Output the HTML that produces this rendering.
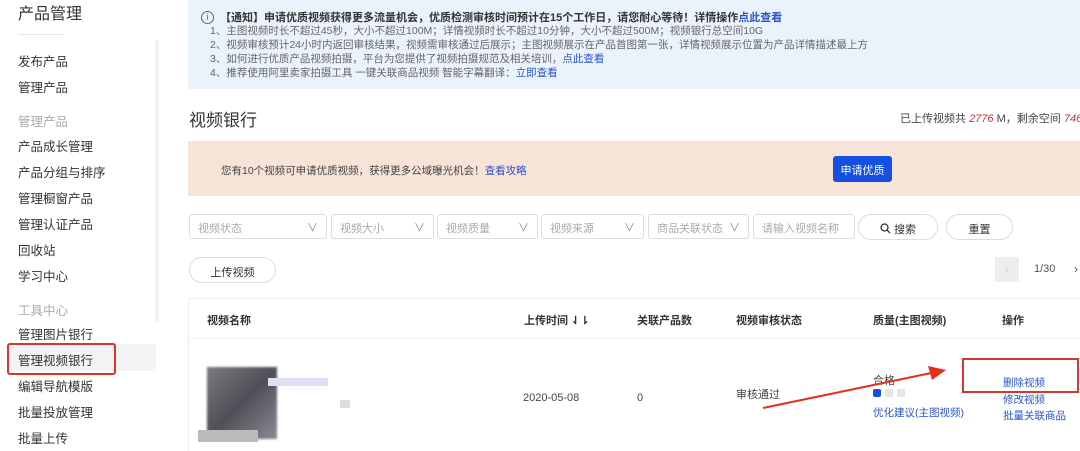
<!DOCTYPE html>
<html><head><meta charset="utf-8"><style>
*{margin:0;padding:0;box-sizing:border-box}
body{width:1080px;height:451px;overflow:hidden;background:#fff;position:relative;font-family:"Liberation Sans","Noto Sans CJK SC",sans-serif;color:#333;font-size:12px}
.a{position:absolute;white-space:nowrap}
.s{left:18px;font-size:12.5px;color:#333}
.g{color:#aaa}
.sel{border:1px solid #ddd;height:25px;top:214px;border-radius:3px;color:#aaa;font-size:11px;padding:5px 0 0 8px}
.sel i{position:absolute;right:8px;top:4px;font-style:normal;color:#888}
.btn{border:1px solid #ddd;border-radius:13px;height:26px;text-align:center;font-size:11px;padding-top:6px;color:#333}
.th{top:312px;font-size:11px;font-weight:bold;color:#333}
.blue{color:#2a55c8}
</style></head><body>
<div class="a" style="left:18px;top:0px;font-size:16px;color:#333">产品管理</div>
<div class="a" style="left:18px;top:34px;width:46px;height:1px;background:#e6e6e6"></div>
<div class="a" style="left:155px;top:40px;width:4px;height:282px;background:#f2f2f2"></div>
<div class="a s" style="top:51px">发布产品</div>
<div class="a s" style="top:77px">管理产品</div>
<div class="a s g" style="top:111px">管理产品</div>
<div class="a s" style="top:136px">产品成长管理</div>
<div class="a s" style="top:162px">产品分组与排序</div>
<div class="a s" style="top:188px">管理橱窗产品</div>
<div class="a s" style="top:214px">管理认证产品</div>
<div class="a s" style="top:240px">回收站</div>
<div class="a s" style="top:266px">学习中心</div>
<div class="a s g" style="top:300px">工具中心</div>
<div class="a s" style="top:324px">管理图片银行</div>
<div class="a" style="left:8px;top:344px;width:148px;height:27px;background:#f3f3f5"></div>
<div class="a" style="left:7px;top:343px;width:109px;height:32px;border:2px solid #d9352c;border-radius:3px"></div>
<div class="a s" style="top:350px">管理视频银行</div>
<div class="a s" style="top:376px">编辑导航模版</div>
<div class="a s" style="top:402px">批量投放管理</div>
<div class="a s" style="top:428px">批量上传</div>
<div class="a" style="left:188px;top:0;width:892px;height:89px;background:#eaf2fb"></div>
<div class="a" style="left:201px;top:11px;width:13px;height:13px;border:1px solid #666;border-radius:50%;font-size:9px;text-align:center;line-height:11px;color:#666">i</div>
<div class="a" style="left:220px;top:9px;font-size:11px;font-weight:bold;color:#333">【通知】申请优质视频获得更多流量机会，优质检测审核时间预计在15个工作日，请您耐心等待！详情操作<span class="blue">点此查看</span></div>
<div class="a" style="left:210px;top:24px;font-size:10.5px;color:#666;line-height:14px">1、主图视频时长不超过45秒，大小不超过100M；详情视频时长不超过10分钟，大小不超过500M；视频银行总空间10G<br>2、视频审核预计24小时内返回审核结果，视频需审核通过后展示；主图视频展示在产品首图第一张，详情视频展示位置为产品详情描述最上方<br>3、如何进行优质产品视频拍摄，平台为您提供了视频拍摄规范及相关培训，<span class="blue">点此查看</span><br>4、推荐使用阿里卖家拍摄工具 一键关联商品视频 智能字幕翻译：<span class="blue">立即查看</span></div>
<div class="a" style="left:189px;top:106px;font-size:17px;color:#333">视频银行</div>
<div class="a" style="left:900px;top:110px;font-size:11px;color:#444">已上传视频共 <i style="color:#c33">2776</i> M，剩余空间 <i style="color:#c33">7464</i></div>
<div class="a" style="left:188px;top:141px;width:892px;height:55px;background:#f8e3d9"></div>
<div class="a" style="left:221px;top:163px;font-size:10.5px;color:#444">您有10个视频可申请优质视频，获得更多公域曝光机会！<span class="blue">查看攻略</span></div>
<div class="a" style="left:833px;top:156px;width:59px;height:26px;background:#1650e0;border-radius:3px;color:#fff;font-size:11px;text-align:center;padding-top:6px">申请优质</div>
<div class="a sel" style="left:189px;width:138px">视频状态<i>∨</i></div>
<div class="a sel" style="left:331px;width:103px">视频大小<i>∨</i></div>
<div class="a sel" style="left:437px;width:101px">视频质量<i>∨</i></div>
<div class="a sel" style="left:541px;width:103px">视频来源<i>∨</i></div>
<div class="a sel" style="left:648px;width:101px">商品关联状态<i>∨</i></div>
<div class="a sel" style="left:753px;width:102px">请输入视频名称</div>
<div class="a btn" style="left:858px;top:214px;width:80px"><svg width="11" height="11" style="vertical-align:-1px"><circle cx="4.5" cy="4.5" r="3.5" fill="none" stroke="#333" stroke-width="1.3"/><line x1="7" y1="7" x2="10" y2="10" stroke="#333" stroke-width="1.3"/></svg> 搜索</div>
<div class="a btn" style="left:946px;top:214px;width:67px">重置</div>
<div class="a btn" style="left:189px;top:257px;width:87px">上传视频</div>
<div class="a" style="left:995px;top:257px;width:24px;height:25px;background:#eee;color:#ccc;text-align:center;padding-top:5px">‹</div>
<div class="a" style="left:1034px;top:263px;font-size:11px;color:#555">1/30</div>
<div class="a" style="left:1074px;top:262px;color:#555">›</div>
<div class="a" style="left:188px;top:298px;width:892px;height:1px;background:#eee"></div>
<div class="a" style="left:188px;top:298px;width:1px;height:153px;background:#eee"></div>
<div class="a" style="left:188px;top:338px;width:892px;height:1px;background:#f2f2f2"></div>
<div class="a th" style="left:207px">视频名称</div>
<div class="a th" style="left:524px">上传时间 ⇃⇂</div>
<div class="a th" style="left:637px">关联产品数</div>
<div class="a th" style="left:736px">视频审核状态</div>
<div class="a th" style="left:873px">质量(主图视频)</div>
<div class="a th" style="left:1002px">操作</div>
<div class="a" style="left:207px;top:367px;width:70px;height:72px;background:linear-gradient(135deg,#7a7a80,#505058 50%,#8a8a92);filter:blur(1px)"></div>
<div class="a" style="left:198px;top:430px;width:60px;height:12px;background:#bbb"></div>
<div class="a" style="left:268px;top:378px;width:60px;height:8px;background:#dde0f2"></div>
<div class="a" style="left:340px;top:400px;width:10px;height:8px;background:#ddd"></div>
<div class="a" style="left:523px;top:392px;font-size:11px;color:#444">2020-05-08</div>
<div class="a" style="left:637px;top:392px;font-size:11px;color:#444">0</div>
<div class="a" style="left:736px;top:386px;font-size:11px;color:#444">审核通过</div>
<div class="a" style="left:873px;top:372px;font-size:11px;color:#444">合格</div>
<div class="a" style="left:873px;top:389px;width:8px;height:8px;background:#1650e0;border-radius:2px"></div>
<div class="a" style="left:885px;top:389px;width:8px;height:8px;background:#e6e6e6"></div>
<div class="a" style="left:897px;top:389px;width:8px;height:8px;background:#e6e6e6"></div>
<div class="a blue" style="left:873px;top:405px;font-size:10.5px">优化建议(主图视频)</div>
<svg class="a" style="left:760px;top:362px" width="190" height="50"><line x1="3" y1="46" x2="176" y2="10" stroke="#e03020" stroke-width="2"/><polygon points="186,8 168,4 172,18" fill="#e03020"/></svg>
<div class="a" style="left:962px;top:358px;width:117px;height:35px;border:2px solid #d9352c"></div>
<div class="a blue" style="left:1003px;top:375px;font-size:10.5px">删除视频</div>
<div class="a blue" style="left:1003px;top:392px;font-size:10.5px">修改视频</div>
<div class="a blue" style="left:1003px;top:408px;font-size:10.5px">批量关联商品</div>
</body></html>
